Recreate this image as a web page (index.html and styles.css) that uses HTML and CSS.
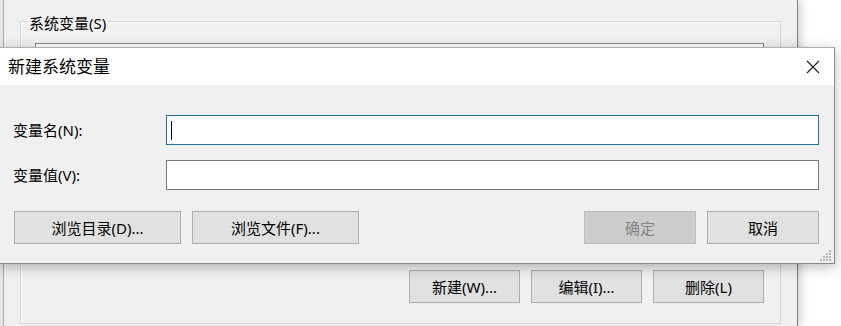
FILE: index.html
```html
<!DOCTYPE html>
<html lang="zh-CN">
<head>
<meta charset="utf-8">
<title>新建系统变量</title>
<link rel="stylesheet" href="styles.css">
</head>
<body>
<div class="desktop">
  <div class="bgwin">
    <div class="edge-strip"></div>
    <fieldset class="groupbox">
      <legend class="gb-label">系统变量(S)</legend>
      <div class="listview"></div>
      <div class="bg-buttons">
        <button class="btn bg-btn">新建(W)...</button>
        <button class="btn bg-btn">编辑(I)...</button>
        <button class="btn bg-btn">删除(L)</button>
      </div>
    </fieldset>
  </div>

  <div class="dialog">
    <div class="titlebar">
      <span class="title">新建系统变量</span>
      <span class="close" aria-label="关闭">
        <svg width="14" height="14" viewBox="0 0 14 14"><path d="M1 1L13 13M13 1L1 13" stroke="#1a1a1a" stroke-width="1.1" fill="none"/></svg>
      </span>
    </div>
    <div class="body">
      <div class="fields">
        <label class="lbl">变量名(N):</label>
        <div class="input focused"><span class="caret"></span></div>
        <label class="lbl">变量值(V):</label>
        <div class="input"></div>
      </div>
      <div class="actions">
        <div class="group">
          <button class="btn wide">浏览目录(D)...</button>
          <button class="btn wide">浏览文件(F)...</button>
        </div>
        <div class="group">
          <button class="btn narrow disabled">确定</button>
          <button class="btn narrow">取消</button>
        </div>
      </div>
    </div>
    <svg class="grip" width="12" height="12" viewBox="0 0 12 12">
      <rect x="9" y="1" width="2" height="2" fill="#b4b4b4"/>
      <rect x="6" y="4" width="2" height="2" fill="#b4b4b4"/>
      <rect x="9" y="4" width="2" height="2" fill="#b4b4b4"/>
      <rect x="3" y="7" width="2" height="2" fill="#b4b4b4"/>
      <rect x="6" y="7" width="2" height="2" fill="#b4b4b4"/>
      <rect x="9" y="7" width="2" height="2" fill="#b4b4b4"/>
      <rect x="0" y="10" width="2" height="2" fill="#b4b4b4"/>
      <rect x="3" y="10" width="2" height="2" fill="#b4b4b4"/>
      <rect x="6" y="10" width="2" height="2" fill="#b4b4b4"/>
      <rect x="9" y="10" width="2" height="2" fill="#b4b4b4"/>
    </svg>
  </div>
</div>
</body>
</html>
```

FILE: styles.css
```css
* { box-sizing: border-box; }

html, body {
  margin: 0;
  padding: 0;
  background: #ffffff;
}

body {
  font-family: "Noto Sans", "Noto Sans CJK SC", sans-serif;
  font-size: 15px;
  color: #000;
}

.desktop {
  position: relative;
  width: 841px;
  height: 326px;
  overflow: hidden;
  background: #ffffff;
}

/* background window */
.bgwin {
  display: flex;
  width: 798px;
  height: 326px;
  padding-top: 10px;
  background: #f0f0f0;
  border-right: 1px solid #7f7f7f;
  box-shadow: 3px 0 8px rgba(0, 0, 0, 0.18);
}

.edge-strip {
  width: 4px;
  margin-top: -10px;
  height: 326px;
  background: #e6e6e6;
  border-right: 1px solid #a8a8a8;
  flex: none;
}

.groupbox {
  margin: 0 0 0 16px;
  padding: 0 16px 19px 14px;
  width: 761px;
  height: 314px;
  border: 1px solid #d6d6d6;
  box-shadow: inset 1px 1px 0 #ffffff;
  min-width: 0;
}

.gb-label {
  padding: 3px 1px 0 1px;
  margin-left: -7px;
  line-height: 20px;
  font-size: 15px;
  color: #000;
}

.listview {
  margin-top: 10px;
  height: 215px;
  background: #ffffff;
  border: 1px solid #828790;
}

.bg-buttons {
  display: flex;
  justify-content: flex-end;
  gap: 11px;
  margin-top: 12px;
  padding-right: 0;
}

.btn {
  font-family: "Noto Sans", "Noto Sans CJK SC", sans-serif;
  font-size: 15px;
  line-height: 20px;
  color: #000;
  background: #e1e1e1;
  border: 1px solid #adadad;
  height: 33px;
  padding: 0;
  margin: 0;
}

.bg-btn {
  width: 111px;
}

/* dialog window */
.dialog {
  position: absolute;
  left: -1px;
  top: 47px;
  width: 836px;
  background: #f0f0f0;
  border: 1px solid #8a8a8a;
  border-top-color: #b0b0b0;
  box-shadow: 0 3px 12px rgba(0, 0, 0, 0.28);
}

.titlebar {
  display: flex;
  align-items: center;
  justify-content: space-between;
  height: 37px;
  background: #ffffff;
  padding: 0 14px 0 8px;
}

.title {
  font-size: 17px;
  line-height: 22px;
  color: #000;
}

.close {
  display: flex;
  width: 14px;
  height: 14px;
}

.body {
  padding: 30px 15px 19px 13px;
}

.fields {
  display: grid;
  grid-template-columns: 153px 1fr;
  row-gap: 15px;
  align-items: center;
}

.lbl {
  font-size: 15px;
  line-height: 20px;
}

.input {
  height: 30px;
  background: #ffffff;
  border: 1px solid #7a7a7a;
  display: flex;
  align-items: center;
  padding-left: 4px;
}

.input.focused {
  border-color: #2e6f96;
  box-shadow: 0 0 0 1px #e2f3fb;
}

.caret {
  width: 1px;
  height: 19px;
  background: #000;
}

.actions {
  display: flex;
  justify-content: space-between;
  margin-top: 21px;
  padding: 0 0 0 1px;
}

.group {
  display: flex;
  gap: 11px;
}

.wide {
  width: 167px;
}

.narrow {
  width: 112px;
}

.btn.disabled {
  background: #cccccc;
  border-color: #bfbfbf;
  color: #838383;
}

.grip {
  position: absolute;
  right: 2px;
  bottom: 2px;
}
```
